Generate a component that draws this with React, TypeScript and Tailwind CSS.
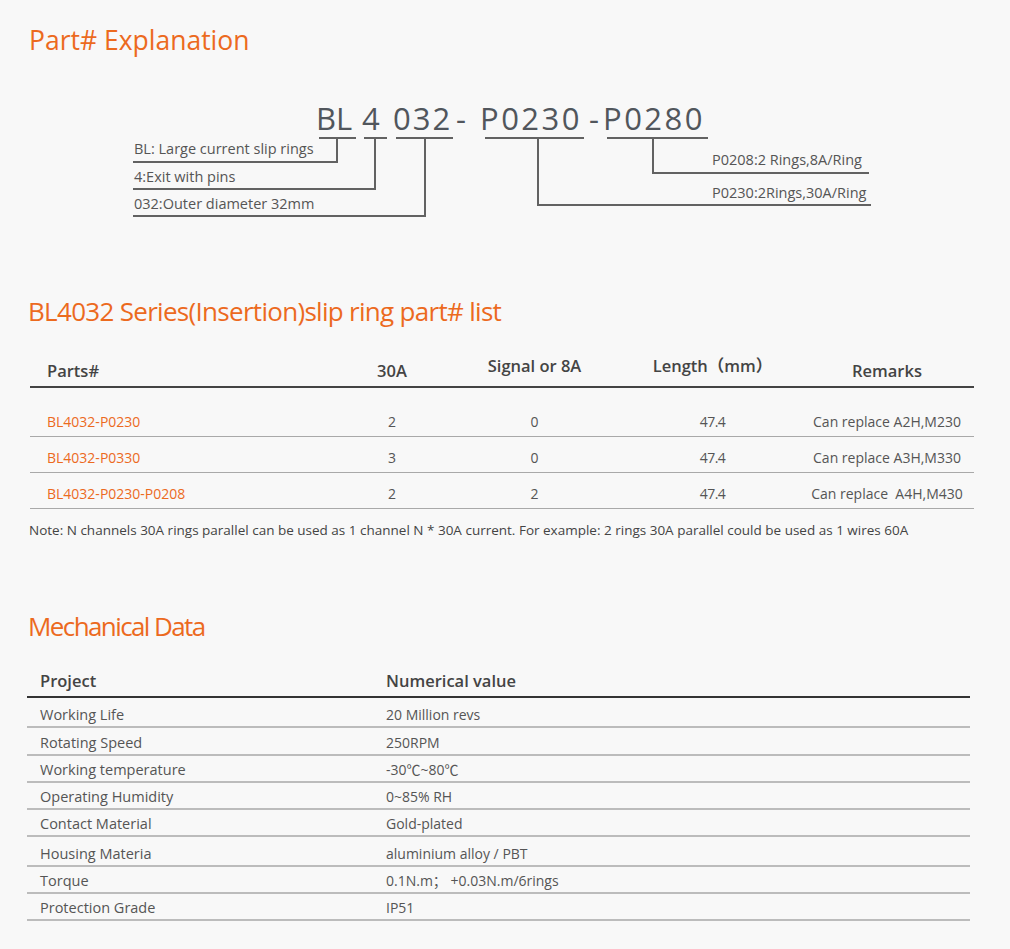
import React from "react";

const ORANGE = "text-[#ec6a1e]";

const partsRows = [
  { part: "BL4032-P0230", a: "2", s: "0", len: "47.4", rem: "Can replace A2H,M230" },
  { part: "BL4032-P0330", a: "3", s: "0", len: "47.4", rem: "Can replace A3H,M330" },
  { part: "BL4032-P0230-P0208", a: "2", s: "2", len: "47.4", rem: "Can replace\u00a0 A4H,M430" },
];

const mechRows: { k: string; v: string; h: string }[] = [
  { k: "Working Life", v: "20 Million revs", h: "h-[30px]" },
  { k: "Rotating Speed", v: "250RPM", h: "h-[28px]" },
  { k: "Working temperature", v: "-30\u2103~80\u2103", h: "h-[27px]" },
  { k: "Operating Humidity", v: "0~85% RH", h: "h-[27px]" },
  { k: "Contact Material", v: "Gold-plated", h: "h-[27px]" },
  { k: "Housing Materia", v: "aluminium alloy / PBT", h: "h-[30px]" },
  { k: "Torque", v: "0.1N.m\uff1b +0.03N.m/6rings", h: "h-[27px]" },
  { k: "Protection Grade", v: "IP51", h: "h-[27px]" },
];

function Diagram() {
  const code = "absolute leading-none whitespace-nowrap text-[31px] text-[#51565c] top-[103px]";
  const label = "absolute leading-none whitespace-nowrap text-[14.5px] text-[#555]";
  return (
    <div className="absolute inset-0 pointer-events-none">
      <svg width="1010" height="298" className="absolute left-0 top-0" fill="none" stroke="#626262" strokeWidth="2">
        <path d="M319 138H356M364 138H387M396 138H453M485 138H584M607 138H708" />
        <path d="M337 138V162H133" />
        <path d="M375 138V189H133" />
        <path d="M425 138V216H133" />
        <path d="M653 138V173H869" />
        <path d="M538 138V205H871" />
      </svg>
      <span className={`${code} left-[316px]`}>BL</span>
      <span className={`${code} left-[362px]`}>4</span>
      <span className={`${code} left-[393px] tracking-[2px]`}>032</span>
      <span className={`${code} left-[456px]`}>-</span>
      <span className={`${code} left-[480px] tracking-[2.5px]`}>P0230</span>
      <span className={`${code} left-[589px]`}>-</span>
      <span className={`${code} left-[603px] tracking-[2.5px]`}>P0280</span>

      <span className={`${label} left-[134px] top-[142px]`}>BL: Large current slip rings</span>
      <span className={`${label} left-[134px] top-[170px]`}>4:Exit with pins</span>
      <span className={`${label} left-[134px] top-[197px]`}>032:Outer diameter 32mm</span>
      <span className={`${label} left-[712px] top-[153px]`}>P0208:2 Rings,8A/Ring</span>
      <span className={`${label} left-[712px] top-[186px]`}>P0230:2Rings,30A/Ring</span>
    </div>
  );
}

const PARTS_COLS = "grid-cols-[290px_144px_141px_195px_174px]";

export default function App() {
  return (
    <div className="min-h-[949px] w-full bg-[#f8f8f8] font-['Open_Sans','Noto_Sans_CJK_SC',sans-serif] text-[#555]">
      {/* Section 1 */}
      <section className="relative h-[298px]">
        <h1 className={`pt-[27px] pl-[29px] text-[26.5px] leading-[26px] font-normal ${ORANGE}`}>Part# Explanation</h1>
        <Diagram />
      </section>

      {/* Section 2 */}
      <section>
        <h2 className={`pl-[28px] text-[26px] leading-[26px] font-normal tracking-[-0.7px] ${ORANGE}`}>
          BL4032 Series(Insertion)slip ring part# list
        </h2>
        <div className="ml-[30px] w-[944px]">
          <div className={`grid h-[64px] ${PARTS_COLS} items-end border-b-2 border-[#444] text-[16.5px] font-semibold leading-[20px] text-[#444]`}>
            <div className="pl-[17px] pb-[5px]">Parts#</div>
            <div className="pb-[5px] text-center">30A</div>
            <div className="pb-[10px] text-center">Signal or 8A</div>
            <div className="pb-[10px] pl-[20px] text-center whitespace-nowrap">Length（mm）</div>
            <div className="pb-[5px] text-center">Remarks</div>
          </div>
          {partsRows.map((r, i) => (
            <div
              key={r.part}
              className={`grid ${PARTS_COLS} items-end border-b border-[#a9a9a9] pb-[4px] text-[14px] leading-[20px] text-[#555] ${
                i === 0 ? "h-[49px]" : "h-[36px]"
              }`}
            >
              <div className={`pl-[17px] ${ORANGE}`}>{r.part}</div>
              <div className="text-center">{r.a}</div>
              <div className="text-center">{r.s}</div>
              <div className="pl-[20px] text-center tracking-[-0.6px]">{r.len}</div>
              <div className="text-center whitespace-nowrap">{r.rem}</div>
            </div>
          ))}
        </div>
        <p className="mt-[11px] pl-[29px] text-[13.5px] leading-[20px] text-[#444] whitespace-nowrap">
          Note: N channels 30A rings parallel can be used as 1 channel N * 30A current. For example: 2 rings 30A parallel could be used as 1 wires 60A
        </p>
      </section>

      {/* Section 3 */}
      <section className="mt-[73px]">
        <h2 className={`pl-[28px] text-[26px] leading-[26px] font-normal tracking-[-1.6px] ${ORANGE}`}>Mechanical Data</h2>
        <div className="ml-[27px] w-[943px]">
          <div className="flex h-[59px] items-end border-b-2 border-[#333] pb-[5px] text-[16.5px] font-semibold leading-[20px] text-[#444]">
            <div className="w-[359px] pl-[13px]">Project</div>
            <div>Numerical value</div>
          </div>
          {mechRows.map((r) => (
            <div key={r.k} className={`flex items-end border-b-2 border-[#bcbcbc] pb-[1px] leading-[20px] text-[#555] ${r.h}`}>
              <div className="w-[359px] pl-[13px] text-[14.5px]">{r.k}</div>
              <div className="text-[14px]">{r.v}</div>
            </div>
          ))}
        </div>
      </section>
    </div>
  );
}
